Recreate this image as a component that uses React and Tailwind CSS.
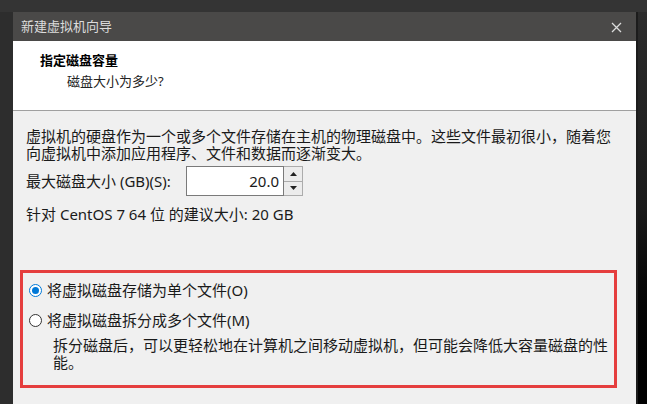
const FONT = "font-['Noto_Sans','Noto_Sans_CJK_SC',sans-serif]";

function Radio({ checked }) {
  return checked ? (
    <span className="flex h-[13px] w-[13px] shrink-0 items-center justify-center rounded-full border border-[#0078d7] bg-white">
      <span className="h-[7px] w-[7px] rounded-full bg-[#0078d7]" />
    </span>
  ) : (
    <span className="h-[13px] w-[13px] shrink-0 rounded-full border border-[#333] bg-white" />
  );
}

export default function App() {
  return (
    <div className={`flex h-[404px] w-[647px] flex-col overflow-hidden bg-[#333] ${FONT}`}>
      <div className="h-[12px] shrink-0 bg-[#343434]" />
      <div className="flex flex-1">
        <div className="w-[13px] shrink-0 bg-[#2d2d2d]" />

        {/* Dialog */}
        <div className="flex w-[623px] flex-col">
          <div className="flex h-[29px] shrink-0 items-center justify-between bg-[#4a4948] pl-[8px] pr-[14px]">
            <span className="text-[13px] text-[#dcdcdc]">新建虚拟机向导</span>
            <svg width="11" height="11" viewBox="0 0 11 11" className="mt-[1px]">
              <path d="M1 1L10 10M10 1L1 10" stroke="#dcdcdc" strokeWidth="1.3" />
            </svg>
          </div>

          <div className="h-[70px] shrink-0 border-b border-[#a0a0a0] bg-white pl-[27px] pt-[11px]">
            <div className="text-[13px] font-bold leading-[17px] text-black">指定磁盘容量</div>
            <div className="mt-[4px] pl-[27px] text-[13px] leading-[17px] text-[#222]">磁盘大小为多少?</div>
          </div>

          <div className="flex flex-1 flex-col bg-[#f0f0f0] pl-[13px] text-[15px] text-[#1a1a1a]">
            <p className="pt-[17px] leading-[17px]">
              虚拟机的硬盘作为一个或多个文件存储在主机的物理磁盘中。这些文件最初很小，随着您
              <br />
              向虚拟机中添加应用程序、文件和数据而逐渐变大。
            </p>

            <div className="mt-[4px] flex h-[30px] items-center">
              <span className="w-[160px] shrink-0">最大磁盘大小 (GB)(S):</span>
              <div className="flex h-[30px] w-[98px] items-center justify-end border border-[#7a7a7a] bg-white pr-[4px]">
                20.0
              </div>
              <div className="flex h-[30px] w-[19px] flex-col border-y border-r border-[#acacac]">
                <div className="flex flex-1 items-center justify-center border-b border-[#acacac] bg-[#ececec]">
                  <svg width="7" height="4" viewBox="0 0 7 4"><path d="M0 4L3.5 0L7 4Z" fill="#222" /></svg>
                </div>
                <div className="flex flex-1 items-center justify-center bg-[#ececec]">
                  <svg width="7" height="4" viewBox="0 0 7 4"><path d="M0 0L3.5 4L7 0Z" fill="#222" /></svg>
                </div>
              </div>
            </div>

            <div className="mt-[9px] leading-[18px]">针对 CentOS 7 64 位 的建议大小: 20 GB</div>

            <div className="-ml-[6px] mt-[47px] h-[118px] w-[597px] border-[3px] border-[#e53e3e] pl-[6px] pt-[7px]">
              <div className="flex h-[20px] items-center gap-[5px]">
                <Radio checked />
                <span>将虚拟磁盘存储为单个文件(O)</span>
              </div>
              <div className="mt-[10px] flex h-[20px] items-center gap-[5px]">
                <Radio />
                <span>将虚拟磁盘拆分成多个文件(M)</span>
              </div>
              <p className="mt-[7px] pl-[24px] leading-[17px]">
                拆分磁盘后，可以更轻松地在计算机之间移动虚拟机，但可能会降低大容量磁盘的性
                <br />
                能。
              </p>
            </div>
          </div>
        </div>

        <div className="flex flex-1 bg-gradient-to-b from-[#2c2c2c] via-[#1a1a1a] to-black">
          <div className="w-[2px] bg-[#1c1c1c]" />
        </div>
      </div>
    </div>
  );
}
